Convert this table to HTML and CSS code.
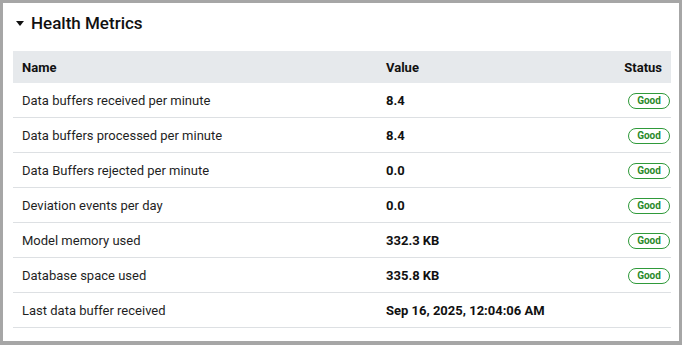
FILE: index.html
```html
<!DOCTYPE html>
<html lang="en">
<head>
    <meta charset="UTF-8">
    <meta name="viewport" content="width=device-width, initial-scale=1.0">
    <title>Health Metrics</title>
    <link rel="stylesheet" href="styles.css">
</head>
<body>
    <div class="panel">
        <div class="panel-title">
            <span class="caret"></span>
            <h2>Health Metrics</h2>
        </div>

        <table class="metrics">
            <thead>
                <tr>
                    <th class="col-name">Name</th>
                    <th class="col-value">Value</th>
                    <th class="col-status">Status</th>
                </tr>
            </thead>
            <tbody>
                <tr>
                    <td>Data buffers received per minute</td>
                    <td class="value">8.4</td>
                    <td class="status"><span class="badge">Good</span></td>
                </tr>
                <tr>
                    <td>Data buffers processed per minute</td>
                    <td class="value">8.4</td>
                    <td class="status"><span class="badge">Good</span></td>
                </tr>
                <tr>
                    <td>Data Buffers rejected per minute</td>
                    <td class="value">0.0</td>
                    <td class="status"><span class="badge">Good</span></td>
                </tr>
                <tr>
                    <td>Deviation events per day</td>
                    <td class="value">0.0</td>
                    <td class="status"><span class="badge">Good</span></td>
                </tr>
                <tr>
                    <td>Model memory used</td>
                    <td class="value">332.3 KB</td>
                    <td class="status"><span class="badge">Good</span></td>
                </tr>
                <tr>
                    <td>Database space used</td>
                    <td class="value">335.8 KB</td>
                    <td class="status"><span class="badge">Good</span></td>
                </tr>
                <tr>
                    <td>Last data buffer received</td>
                    <td class="value">Sep 16, 2025, 12:04:06 AM</td>
                    <td class="status"></td>
                </tr>
            </tbody>
        </table>
    </div>
</body>
</html>
```

FILE: styles.css
```css
html, body {
    height: 100%;
}

body {
    font-family: Roboto, 'Liberation Sans', sans-serif;
    margin: 0;
    padding: 3px 3px 4px 3px;
    box-sizing: border-box;
    background-color: #a6a6a6;
    color: #1f1f1f;
}

.panel {
    background-color: white;
    height: 100%;
    box-sizing: border-box;
    padding: 0 8px 0 10px;
}

.panel-title {
    display: flex;
    align-items: center;
    height: 40px;
    padding-left: 3px;
}

.caret {
    width: 0;
    height: 0;
    border-left: 4px solid transparent;
    border-right: 4px solid transparent;
    border-top: 5px solid #111;
    margin-right: 7px;
    margin-top: 1px;
}

.panel-title h2 {
    margin: 0;
    font-size: 17px;
    font-weight: 500;
    color: #111;
}

.metrics {
    width: 100%;
    border-collapse: collapse;
    margin-top: 8px;
    font-size: 13px;
}

.metrics th {
    background-color: #e6e9ec;
    height: 32px;
    padding: 0 9px;
    text-align: left;
    font-weight: bold;
    color: #111;
}

.metrics th.col-name {
    width: 346px;
}

.metrics th.col-status {
    text-align: right;
}

.metrics td {
    height: 34px;
    padding: 0 9px;
    border-bottom: 1px solid #dde0e3;
}

.metrics td.value {
    font-weight: bold;
    color: #111;
}

.metrics td.status {
    text-align: right;
    padding-right: 1px;
}

.badge {
    display: inline-block;
    border: 1px solid #2f9a3a;
    border-radius: 9px;
    color: #2a8a2a;
    font-size: 10px;
    font-weight: bold;
    line-height: 14px;
    padding: 0 7px;
    width: 26px;
    text-align: center;
}
```
